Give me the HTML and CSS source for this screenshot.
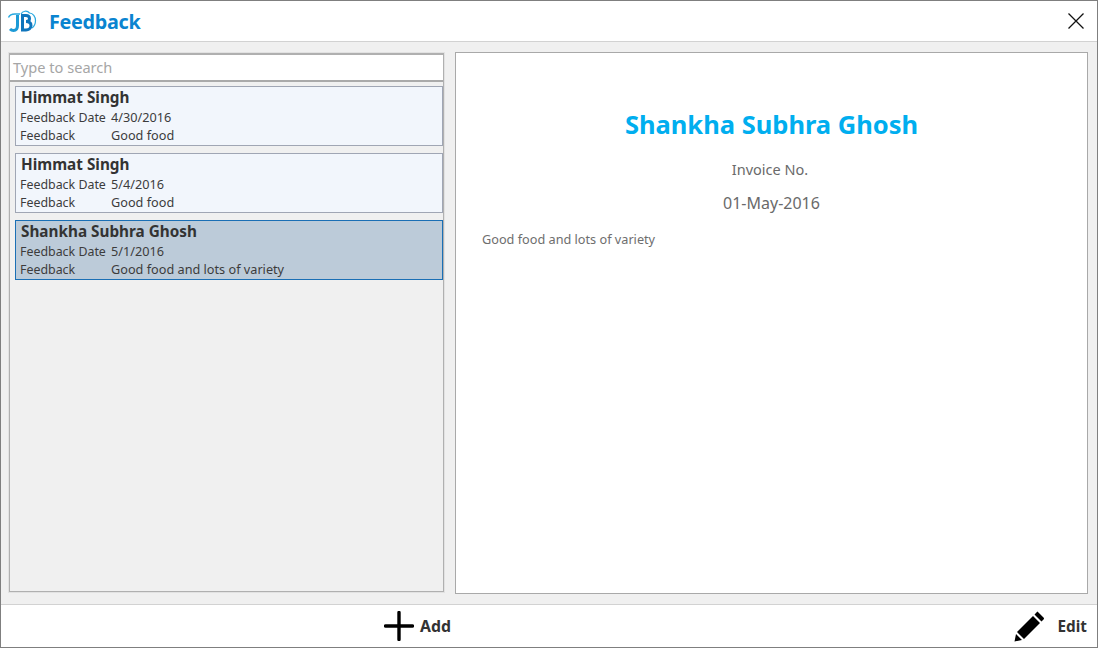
FILE: index.html
```html
<!DOCTYPE html>
<html>
<head>
<meta charset="utf-8">
<title>Feedback</title>
<link rel="stylesheet" href="styles.css">
</head>
<body>
<div class="window">
  <header class="titlebar">
    <svg class="logo" width="30" height="24" viewBox="0 0 30 24" fill="none">
      <path d="M1.500 8.500 C2.500 6 5 5 8 5 L13 5" stroke="#29a9e0" stroke-width="1.400"/>
      <path d="M10.500 6 V16.500 C10.500 20 8.500 21.500 6.500 21.500 C5 21.500 4 21 3 20" stroke="#1c9ad6" stroke-width="3"/>
      <path d="M15.500 6.500 H19 C22 6.500 22.500 8 22.500 9.500 C22.500 11.500 21 12.500 19 12.500 C22 12.500 24 13.500 24 16.500 C24 19.500 21.500 21 19 21 H15.500 Z" stroke="#0f75bc" stroke-width="3"/>
      <path d="M14 5 C15.500 2 20 1 22.500 4 C26 4 28.500 8 28.500 11.500 C28.500 15 27 17.500 25 19" stroke="#29a9e0" stroke-width="1.200"/>
    </svg>
    <h1 class="title">Feedback</h1>
    <svg class="close" width="16" height="16" viewBox="0 0 16 16"><path d="M0.500 0.500 L15.500 15.500 M15.500 0.500 L0.500 15.500" stroke="#111" stroke-width="1.300"/></svg>
  </header>
  <main class="content">
    <section class="list-panel">
      <div class="search">Type to search</div>
      <div class="cards">
        <article class="card">
          <div class="card-name">Himmat Singh</div>
          <div class="row"><span class="label">Feedback Date</span><span>4/30/2016</span></div>
          <div class="row"><span class="label">Feedback</span><span>Good food</span></div>
        </article>
        <article class="card">
          <div class="card-name">Himmat Singh</div>
          <div class="row"><span class="label">Feedback Date</span><span>5/4/2016</span></div>
          <div class="row"><span class="label">Feedback</span><span>Good food</span></div>
        </article>
        <article class="card selected">
          <div class="card-name">Shankha Subhra Ghosh</div>
          <div class="row"><span class="label">Feedback Date</span><span>5/1/2016</span></div>
          <div class="row"><span class="label">Feedback</span><span>Good food and lots of variety</span></div>
        </article>
      </div>
    </section>
    <section class="detail">
      <h2 class="detail-name">Shankha Subhra Ghosh</h2>
      <div class="detail-line invoice">Invoice No.</div>
      <div class="detail-line date">01-May-2016</div>
      <p class="detail-text">Good food and lots of variety</p>
    </section>
  </main>
  <footer class="footer">
    <div class="action add">
      <svg width="30" height="30" viewBox="0 0 30 30"><path d="M15 1.500 V28.500 M1.500 15 H28.500" stroke="#000" stroke-width="3.400" stroke-linecap="round"/></svg>
      <span>Add</span>
    </div>
    <div class="action edit">
      <svg width="32" height="32" viewBox="0 0 32 32"><path d="M23.500 1.500 L29.500 7.500 Q30.500 8.500 29.500 9.500 L27.500 11.500 L20.500 4.500 L22 3 Q23 1.500 23.500 1.500 Z M19 6 L26 13 L10 29 L3 22 Z M2 24 L8 30 L0.500 31.500 Z" fill="#000"/></svg>
      <span>Edit</span>
    </div>
  </footer>
</div>
</body>
</html>
```
FILE: styles.css
```css
* { box-sizing: border-box; }
html, body { margin: 0; padding: 0; }
body {
  width: 1098px;
  height: 648px;
  overflow: hidden;
  font-family: "Noto Sans", "Open Sans", sans-serif;
  background: #fff;
}
.window {
  width: 1098px;
  height: 648px;
  border: 1px solid #7f7f7f;
  display: flex;
  flex-direction: column;
}
.titlebar {
  height: 41px;
  flex: none;
  border-bottom: 1px solid #d2d2d2;
  background: #fff;
  display: flex;
  align-items: center;
  padding: 0 13px 0 6px;
}
.logo { flex: none; }
.title {
  margin: 0 0 0 12px;
  font-size: 19.800px;
  font-weight: 700;
  color: #0a84d0;
  letter-spacing: -0.3px;
  flex: 1;
}
.close { flex: none; }
.content {
  flex: 1;
  min-height: 0;
  background: #f0f0f0;
  border-bottom: 1px solid #d2d2d2;
  display: flex;
  gap: 11px;
  padding: 10px 9px 9px 8px;
}
.list-panel {
  width: 435px;
  height: 539px;
  margin-top: 1px;
  border: 2px solid #b0b0b0;
  border-width: 2px 1px 1px 1px;
  outline: 1px solid #e2e2e2;
  display: flex;
  flex-direction: column;
}
.search {
  height: 27px;
  flex: none;
  background: #fff;
  border-bottom: 2px solid #aaa;
  padding-left: 3px;
  font-size: 14.600px;
  line-height: 24px;
  color: #a6a6a6;
}
.cards {
  display: flex;
  flex-direction: column;
  gap: 7px;
  padding: 4px 0 0 5px;
}
.card {
  height: 60px;
  width: 428px;
  background: #f2f6fc;
  border: 1px solid #a0a6b4;
  padding: 0 0 0 4px;
  color: #3c3c3c;
}
.card.selected {
  background: #bccbd9;
  border-color: #1a6fb5;
}
.card-name {
  font-size: 15.300px;
  font-weight: 700;
  line-height: 20px;
  margin: 0 0 0 1px;
  color: #333;
}
.row {
  display: flex;
  align-items: baseline;
  height: 18px;
  font-size: 12.700px;
  line-height: 18px;
  margin-top: 1px;
  margin-bottom: -1px;
}
.label { width: 91px; flex: none; font-size: 12.400px; }
.detail {
  width: 633px;
  height: 542px;
  background: #fff;
  border: 1px solid #a9a9a9;
  display: flex;
  flex-direction: column;
  align-items: center;
  padding-top: 51px;
}
.detail-name {
  margin: 0;
  font-size: 25.500px;
  font-weight: 700;
  line-height: 40px;
  color: #00aeef;
}
.detail-line {
  line-height: 20px;
  color: #6a6a6a;
}
.invoice { margin-top: 15px; margin-right: 3px; font-size: 14.500px; }
.date { margin-top: 14px; font-size: 16px; }
.detail-text {
  align-self: flex-start;
  margin: 17px 0 0 26px;
  font-size: 12.700px;
  line-height: 18px;
  color: #6e6e6e;
}
.footer {
  height: 42px;
  flex: none;
  background: #fff;
  display: flex;
  align-items: center;
  justify-content: space-between;
  padding: 0 10px 0 383px;
}
.action {
  display: flex;
  align-items: center;
  font-weight: 700;
  color: #333;
}
.add { gap: 6px; font-size: 15.800px; }
.edit { gap: 12px; font-size: 15.300px; }
```
